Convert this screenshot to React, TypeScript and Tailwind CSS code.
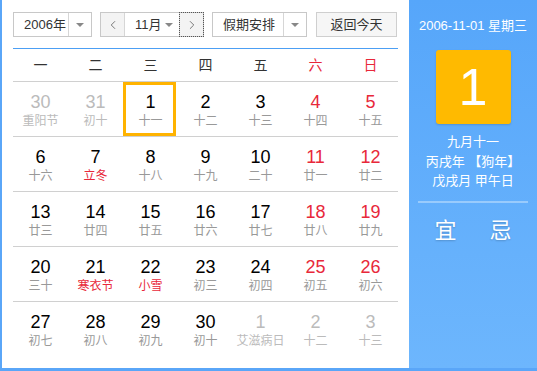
import { ChevronLeft, ChevronRight } from "lucide-react";

type Day = {
  n: number;
  lunar: string;
  faded?: boolean;
  red?: boolean;
  lunarRed?: boolean;
  today?: boolean;
};

const weeks: Day[][] = [
  [
    { n: 30, lunar: "重阳节", faded: true },
    { n: 31, lunar: "初十", faded: true },
    { n: 1, lunar: "十一", today: true },
    { n: 2, lunar: "十二" },
    { n: 3, lunar: "十三" },
    { n: 4, lunar: "十四", red: true },
    { n: 5, lunar: "十五", red: true },
  ],
  [
    { n: 6, lunar: "十六" },
    { n: 7, lunar: "立冬", lunarRed: true },
    { n: 8, lunar: "十八" },
    { n: 9, lunar: "十九" },
    { n: 10, lunar: "二十" },
    { n: 11, lunar: "廿一", red: true },
    { n: 12, lunar: "廿二", red: true },
  ],
  [
    { n: 13, lunar: "廿三" },
    { n: 14, lunar: "廿四" },
    { n: 15, lunar: "廿五" },
    { n: 16, lunar: "廿六" },
    { n: 17, lunar: "廿七" },
    { n: 18, lunar: "廿八", red: true },
    { n: 19, lunar: "廿九", red: true },
  ],
  [
    { n: 20, lunar: "三十" },
    { n: 21, lunar: "寒衣节", lunarRed: true },
    { n: 22, lunar: "小雪", lunarRed: true },
    { n: 23, lunar: "初三" },
    { n: 24, lunar: "初四" },
    { n: 25, lunar: "初五", red: true },
    { n: 26, lunar: "初六", red: true },
  ],
  [
    { n: 27, lunar: "初七" },
    { n: 28, lunar: "初八" },
    { n: 29, lunar: "初九" },
    { n: 30, lunar: "初十" },
    { n: 1, lunar: "艾滋病日", faded: true },
    { n: 2, lunar: "十二", faded: true },
    { n: 3, lunar: "十三", faded: true },
  ],
];

const weekdays = ["一", "二", "三", "四", "五", "六", "日"];

const cjk = "font-['Liberation_Sans','Noto_Sans_CJK_SC',sans-serif]";

function Caret() {
  return (
    <span className="h-0 w-0 border-x-[4px] border-t-[4px] border-x-transparent border-t-[#888]" />
  );
}

function Select({ label, width }: { label: string; width: string }) {
  return (
    <div className={`flex h-[25px] ${width} items-stretch border border-[#c8c8c8] bg-white`}>
      <span className="flex flex-1 items-center pl-[10px] text-[13px] text-[#333]">{label}</span>
      <span className="flex w-[23px] items-center justify-center border-l border-[#d6d6d6]">
        <Caret />
      </span>
    </div>
  );
}

function Cell({ d }: { d: Day }) {
  let numColor = "text-black";
  let lunarColor = "text-[#999]";
  if (d.faded) {
    numColor = "text-[#bbb]";
    lunarColor = "text-[#bbb]";
  } else if (d.red) {
    numColor = "text-[#e8283a]";
  }
  if (d.lunarRed) lunarColor = "text-[#e8283a]";

  return (
    <div className="relative flex h-[54px] flex-col items-center pt-[9px]">
      {d.today && (
        <div className="absolute left-0 top-0 h-[54px] w-[53px] border-[3px] border-[#ffb300]" />
      )}
      <span className={`text-[18px] leading-[22px] ${numColor}`}>{d.n}</span>
      <span className={`text-[12px] leading-[16px] ${lunarColor}`}>{d.lunar}</span>
    </div>
  );
}

export default function App() {
  return (
    <div className={`flex h-[371px] w-[537px] border-b-[3px] border-l-2 border-[#5aa6f8] ${cjk}`}>
      <div className="w-[407px] bg-white pl-[11px] pt-[12px]">
        <div className="flex w-[385px] items-center">
          <Select label="2006年" width="w-[79px]" />
          <div className="ml-[8px] flex h-[25px] w-[104px] border border-[#c8c8c8]">
            <span className="flex w-[23px] items-center justify-center bg-[#f3f3f3] text-[#666]">
              <ChevronLeft size={14} strokeWidth={1.5} />
            </span>
            <span className="flex flex-1 items-center justify-between border-x border-[#d6d6d6] bg-white pl-[10px] pr-[6px] text-[13px] text-[#333]">
              11月
              <Caret />
            </span>
            <span className="flex w-[23px] items-center justify-center bg-[#f3f3f3] text-[#666] outline outline-1 outline-dotted outline-[#555]">
              <ChevronRight size={14} strokeWidth={1.5} />
            </span>
          </div>
          <div className="ml-[8px]">
            <Select label="假期安排" width="w-[95px]" />
          </div>
          <button className="ml-[9px] h-[25px] w-[81px] border border-[#cfcfcf] bg-[#f6f6f6] text-[13px] text-[#333]">
            返回今天
          </button>
        </div>

        <div className="mt-[11px] w-[385px] border-t border-[#4c9ff4]">
          <div className="grid h-[33px] grid-cols-7 border-b border-[#d0d0d0]">
            {weekdays.map((w, i) => (
              <span
                key={w}
                className={`flex items-center justify-center text-[14px] ${i > 4 ? "text-[#e8283a]" : "text-[#333]"}`}
              >
                {w}
              </span>
            ))}
          </div>
          {weeks.map((row, r) => (
            <div
              key={r}
              className={`grid grid-cols-7 ${r < weeks.length - 1 ? "border-b border-[#d0d0d0]" : ""}`}
            >
              {row.map((d, i) => (
                <Cell key={i} d={d} />
              ))}
            </div>
          ))}
        </div>
      </div>

      <div className="flex w-[128px] flex-col items-center bg-gradient-to-b from-[#56a6fa] to-[#6db6fd] text-white">
        <div className="mt-[18px] text-[13px] leading-[16px]">2006-11-01 星期三</div>
        <div className="mt-[16px] flex h-[74px] w-[75px] items-center justify-center rounded-[3px] bg-[#ffba00] text-[52px] leading-none shadow-[0_1px_2px_rgba(0,0,0,0.15)]">
          1
        </div>
        <div className="mt-[8px] flex flex-col items-center text-[13px] leading-[19.5px]">
          <span>九月十一</span>
          <span>丙戌年 【狗年】</span>
          <span>戊戌月 甲午日</span>
        </div>
        <div className="mt-[10px] h-[2px] w-[110px] bg-white/35" />
        <div className="mt-[14px] flex w-[110px] justify-around text-[22px] leading-[28px] [text-shadow:0_1px_2px_rgba(0,0,0,0.2)]">
          <span>宜</span>
          <span>忌</span>
        </div>
      </div>
    </div>
  );
}
